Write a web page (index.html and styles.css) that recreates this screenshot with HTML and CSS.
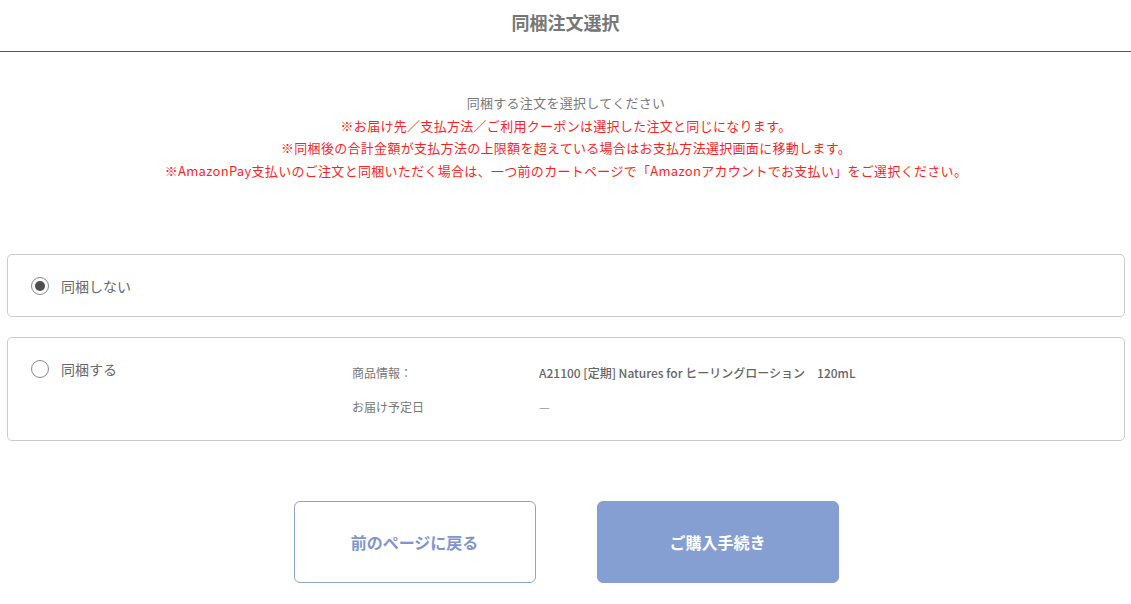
FILE: index.html
```html
<!DOCTYPE html>
<html lang="ja">
<head>
<meta charset="utf-8">
<title>同梱注文選択</title>
<link rel="stylesheet" href="styles.css">
</head>
<body>
<header class="page-header">
  <h1 class="page-title">同梱注文選択</h1>
</header>
<main class="content">
  <div class="notice">
    <p class="notice-lead">同梱する注文を選択してください</p>
    <p class="notice-warn">※お届け先／支払方法／ご利用クーポンは選択した注文と同じになります。</p>
    <p class="notice-warn">※同梱後の合計金額が支払方法の上限額を超えている場合はお支払方法選択画面に移動します。</p>
    <p class="notice-warn">※AmazonPay支払いのご注文と同梱いただく場合は、一つ前のカートページで「Amazonアカウントでお支払い」をご選択ください。</p>
  </div>

  <div class="options">
    <label class="option option-single">
      <span class="radio checked"></span>
      <span class="option-label">同梱しない</span>
    </label>

    <div class="option option-order">
      <label class="option-choice">
        <span class="radio"></span>
        <span class="option-label">同梱する</span>
      </label>
      <dl class="order-info">
        <dt>商品情報：</dt>
        <dd class="product">A21100 [定期] Natures for ヒーリングローション　120mL</dd>
        <dt>お届け予定日</dt>
        <dd>—</dd>
      </dl>
    </div>
  </div>

  <div class="actions">
    <button class="btn btn-back" type="button">前のページに戻る</button>
    <button class="btn btn-primary" type="button">ご購入手続き</button>
  </div>
</main>
</body>
</html>
```

FILE: styles.css
```css
* { box-sizing: border-box; }

html, body {
  margin: 0;
  padding: 0;
  background: #fff;
}

body {
  font-family: "Noto Sans CJK JP", "Noto Sans", sans-serif;
  color: #777;
}

.page-header {
  height: 52px;
  border-bottom: 1px solid #555;
  display: flex;
  align-items: flex-start;
  justify-content: center;
}

.page-title {
  margin: 10px 0 0;
  font-size: 18px;
  line-height: 24px;
  font-weight: 700;
  color: #777;
}

.content {
  padding: 0 6px 0 7px;
}

.notice {
  margin-top: 40px;
  text-align: center;
  font-size: 13px;
  letter-spacing: 0.3px;
  line-height: 22.7px;
}

.notice p { margin: 0; }

.notice-lead { color: #7a7a7a; }
.notice-warn { color: #ff1f1f; }

.options {
  margin-top: 71px;
  display: flex;
  flex-direction: column;
  gap: 20px;
}

.option {
  border: 1px solid #ccc;
  border-radius: 5px;
  background: #fff;
}

.option-single {
  display: flex;
  align-items: center;
  gap: 12px;
  padding: 22px 23px 21px;
}

.option-order {
  display: flex;
  align-items: flex-start;
  padding: 22px 23px 23px;
}

.option-choice {
  flex: 0 0 321px;
  display: flex;
  align-items: center;
  gap: 12px;
}

.radio {
  width: 18px;
  height: 18px;
  border: 1px solid #8a8a8a;
  border-radius: 50%;
  display: flex;
  align-items: center;
  justify-content: center;
  flex: 0 0 18px;
}

.radio.checked::after {
  content: "";
  width: 10px;
  height: 10px;
  border-radius: 50%;
  background: #4f4f4f;
}

.option-label {
  font-size: 14px;
  line-height: 18px;
  color: #6a6a6a;
}

.order-info {
  margin: 3px 0 0;
  display: grid;
  grid-template-columns: 187px auto;
  row-gap: 14px;
  font-size: 12px;
  line-height: 20px;
}

.order-info dt {
  color: #777;
}

.order-info dd {
  margin: 0;
  color: #999;
}

.order-info dd.product {
  color: #666;
  font-weight: 500;
}

.actions {
  margin-top: 60px;
  display: flex;
  justify-content: center;
  gap: 61px;
}

.btn {
  width: 242px;
  height: 82px;
  border-radius: 6px;
  font-family: inherit;
  font-size: 16px;
  font-weight: 700;
  cursor: pointer;
}

.btn-back {
  background: #fff;
  border: 1px solid #8ea3d3;
  color: #7f96cc;
}

.btn-primary {
  background: #869fd3;
  border: 1px solid #869fd3;
  color: #fff;
}
```
